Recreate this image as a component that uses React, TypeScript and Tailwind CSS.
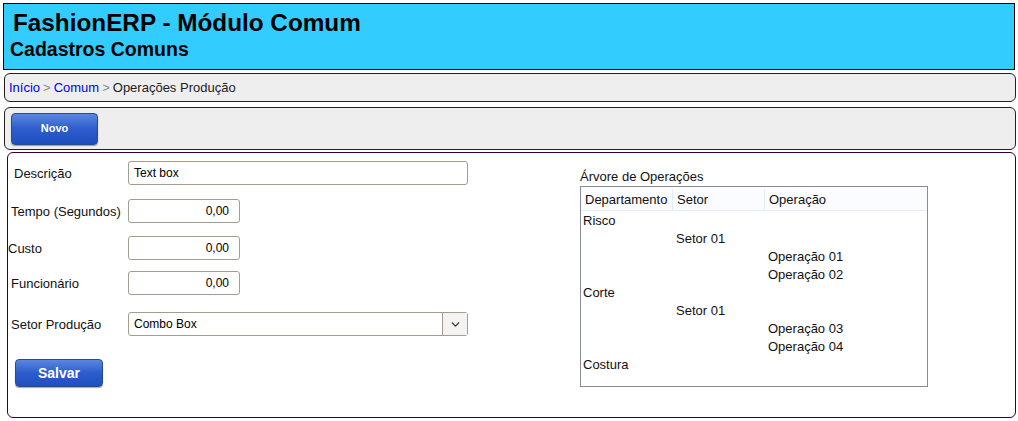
import { ChevronDown } from "lucide-react";

const tree = [
  { col: 0, text: "Risco" },
  { col: 1, text: "Setor 01" },
  { col: 2, text: "Operação 01" },
  { col: 2, text: "Operação 02" },
  { col: 0, text: "Corte" },
  { col: 1, text: "Setor 01" },
  { col: 2, text: "Operação 03" },
  { col: 2, text: "Operação 04" },
  { col: 0, text: "Costura" },
];

const indent = ["pl-[2px]", "pl-[95px]", "pl-[187px]"];

function NumberField({ value }: { value: string }) {
  return (
    <div className="flex h-[24px] w-[112px] items-center justify-end rounded-[3px] border border-[#a39d90] bg-white pr-[10px] text-[12px] text-black">
      {value}
    </div>
  );
}

export default function App() {
  return (
    <div className="h-[421px] w-[1018px] overflow-hidden bg-white font-['Liberation_Sans',Arial,sans-serif] text-[13px] text-[#111]">
      <header className="mx-[3px] mt-[3px] h-[67px] border border-black bg-[#33ccff] pl-[9px] pt-[5px]">
        <h1 className="text-[24.3px] font-bold leading-[28px] text-black">FashionERP - Módulo Comum</h1>
        <h2 className="-ml-[3px] text-[19.5px] font-bold leading-[24px] text-black">Cadastros Comuns</h2>
      </header>

      <nav className="mt-[3px] ml-[4px] mr-[2px] flex h-[29px] items-center rounded-[6px] border border-[#222] bg-[#eeeeee] pl-[4px] text-[13px]">
        <a className="text-[#0000ee]">Início</a>
        <span className="mx-[3px] text-[#888]">&gt;</span>
        <a className="text-[#0000ee]">Comum</a>
        <span className="mx-[3px] text-[#888]">&gt;</span>
        <span className="text-[#222]">Operações Produção</span>
      </nav>

      <div className="mt-[5px] ml-[4px] mr-[2px] flex h-[43px] items-center rounded-[6px] border border-[#222] bg-[#eeeeee] pl-[6px]">
        <button className="h-[32px] w-[87px] rounded-[4px] border border-[#264c8e] bg-gradient-to-b from-[#5b87e0] via-[#2d5ccc] to-[#1f4fbf] text-[11px] font-bold text-white shadow-[0_1px_1px_rgba(0,0,0,0.35)]">
          Novo
        </button>
      </div>

      <main className="mt-[2px] ml-[7px] mr-[2px] flex h-[266px] rounded-[6px] border border-[#330033] bg-white">
        <section className="w-[572px] pt-[8px]">
          <div className="flex items-center">
            <label className="w-[120px] pl-[6px] pt-[2px]">Descrição</label>
            <div className="flex h-[24px] w-[340px] items-center rounded-[3px] border border-[#a39d90] bg-white pl-[5px] text-[12px] text-black">
              Text box
            </div>
          </div>
          <div className="mt-[14px] flex items-center">
            <label className="w-[120px] pl-[3px] pt-[2px]">Tempo (Segundos)</label>
            <NumberField value="0,00" />
          </div>
          <div className="mt-[13px] flex items-center">
            <label className="w-[120px] pt-[2px]">Custo</label>
            <NumberField value="0,00" />
          </div>
          <div className="mt-[11px] flex items-center">
            <label className="w-[120px] pl-[3px] pt-[2px]">Funcionário</label>
            <NumberField value="0,00" />
          </div>
          <div className="mt-[17px] flex items-center">
            <label className="w-[120px] pl-[3px] pt-[2px]">Setor Produção</label>
            <div className="flex h-[24px] w-[340px] items-center rounded-[3px] border border-[#a39d90] bg-white text-[12px] text-black">
              <span className="flex-1 pl-[5px]">Combo Box</span>
              <span className="flex h-full w-[25px] items-center justify-center border-l border-[#a39d90] bg-[#f4f3f1]">
                <ChevronDown size={13} strokeWidth={2.5} className="text-[#333]" />
              </span>
            </div>
          </div>
          <button className="mt-[23px] ml-[7px] h-[28px] w-[88px] rounded-[4px] border border-[#264c8e] bg-gradient-to-b from-[#5b87e0] via-[#2d5ccc] to-[#1f4fbf] text-[14px] font-bold text-white shadow-[0_1px_1px_rgba(0,0,0,0.35)]">
            Salvar
          </button>
        </section>

        <section className="pt-[17px]">
          <div className="-mt-[1px] mb-[1px] leading-[16px] text-[13px]">Árvore de Operações</div>
          <div className="h-[201px] w-[348px] border border-[#888c94] bg-white">
            <div className="flex h-[24px] items-center border-b border-[#e4ecf8] bg-[#fafcff] pt-[2px]">
              <div className="flex h-full w-[92px] items-center border-r border-[#e4ecf8] pl-[4px]">Departamento</div>
              <div className="flex h-full w-[92px] items-center border-r border-[#e4ecf8] pl-[4px]">Setor</div>
              <div className="flex h-full flex-1 items-center pl-[4px]">Operação</div>
            </div>
            <div className="pt-[1px]">
              {tree.map((row, i) => (
                <div key={i} className={`h-[18px] leading-[18px] ${indent[row.col]}`}>
                  {row.text}
                </div>
              ))}
            </div>
          </div>
        </section>
      </main>
    </div>
  );
}
